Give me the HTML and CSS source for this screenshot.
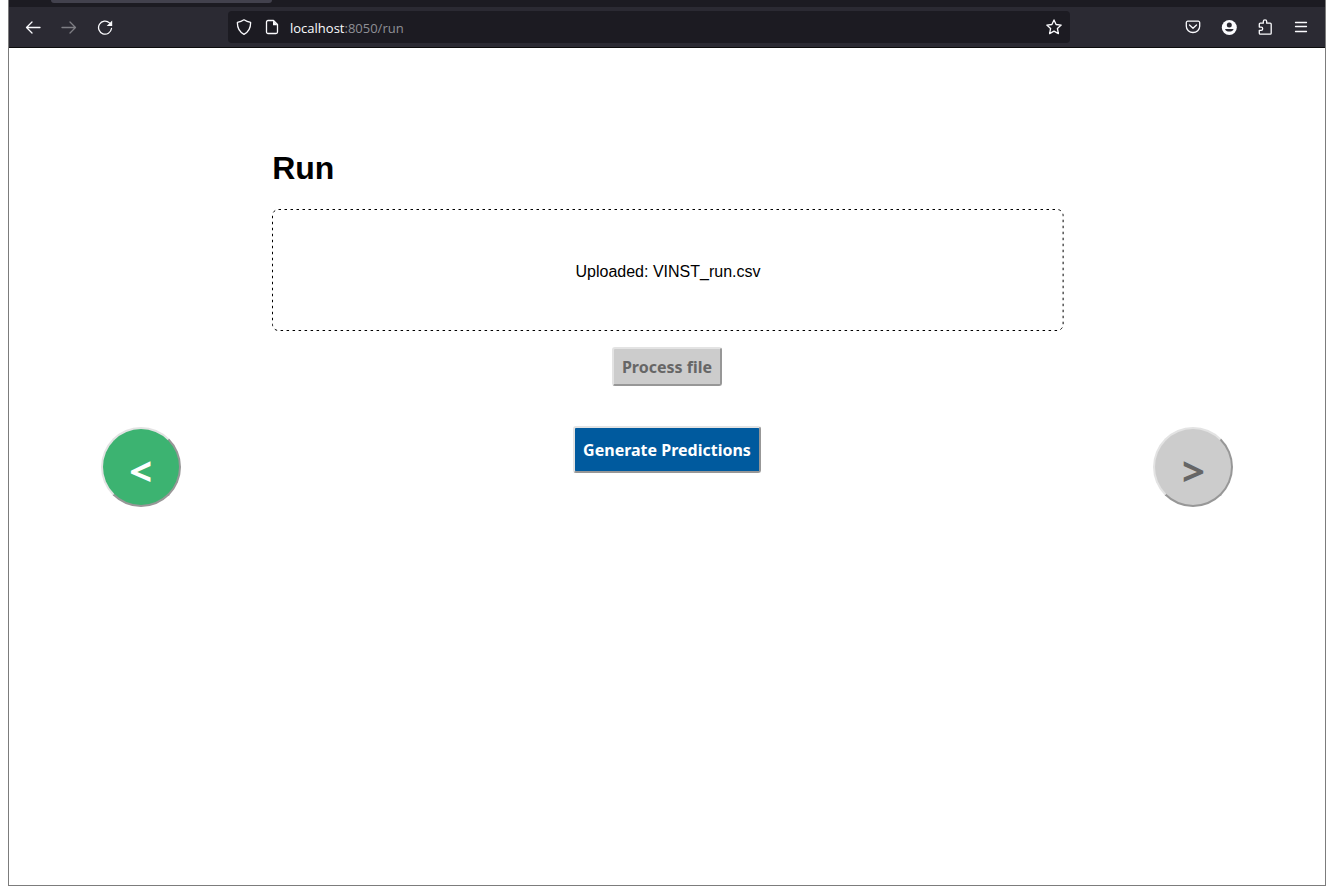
FILE: index.html
```html
<!DOCTYPE html>
<html lang="en">
<head>
<meta charset="utf-8">
<title>Run</title>
<link rel="stylesheet" href="styles.css">
</head>
<body>
<div class="window">
  <header class="browser">
    <div class="tabstrip"><div class="tab"></div></div>
    <nav class="toolbar" aria-label="Browser toolbar">
      <div class="group nav-group">
        <button class="tool" aria-label="Back"><svg viewBox="0 0 16 16"><path d="M15 8.500H1.500M7 3L1.500 8.500L7 14"/></svg></button>
        <button class="tool dim" aria-label="Forward"><svg viewBox="0 0 16 16"><path d="M1 8.500h13.500M9 3L14.500 8.500L9 14"/></svg></button>
        <button class="tool" aria-label="Reload"><svg viewBox="0 0 16 16"><path d="M14.500 9.500A6.500 6.500 0 1 1 12.500 3.900"/><path class="solid" d="M15.200 1.500v5.500H9.700z"/></svg></button>
      </div>
      <div class="address">
        <svg viewBox="0 0 16 16"><path d="M8 .8C6.200 2 4 2.900 1.400 3.300C1.200 8.800 3.500 13 8 15.300C12.500 13 14.800 8.800 14.600 3.300C12 2.900 9.800 2 8 .8z"/></svg>
        <svg viewBox="0 0 16 16"><path d="M4 1.500h5.500l4 4V13a1.500 1.500 0 0 1-1.500 1.500H4A1.500 1.500 0 0 1 2.500 13V3A1.500 1.500 0 0 1 4 1.500z"/><path class="solid" d="M9 1.500v4.700h4.500z"/></svg>
        <div class="url"><span>localhost</span>:8050/run</div>
        <button class="tool star" aria-label="Bookmark"><svg viewBox="0 0 16 16"><path d="M8 .9l2.100 4.600 5.100.6-3.800 3.400 1 5.100L8 12.100l-4.400 2.500 1-5.100L.8 6.100l5.100-.6z"/></svg></button>
      </div>
      <div class="group menu-group">
        <button class="tool" aria-label="Pocket"><svg viewBox="0 0 16 16"><path d="M2.800 2.200h10.400a1.500 1.500 0 0 1 1.500 1.500v3.500a6.700 6.300 0 0 1-13.400 0V3.700a1.500 1.500 0 0 1 1.500-1.500zM4.500 6L8 9.300 11.500 6"/></svg></button>
        <button class="tool" aria-label="Account"><svg viewBox="0 0 16 16"><circle class="disc" cx="8.300" cy="8.500" r="7.500"/><circle class="hole" cx="8.300" cy="6.100" r="2.500"/><path class="hole" d="M4 10h8.600a4.500 3.700 0 0 1-8.600 0z"/></svg></button>
        <button class="tool" aria-label="Extensions"><svg viewBox="0 0 16 16"><path d="M2.300 5.200a1 1 0 0 1 1-1h3V2.500a1.700 1.700 0 0 1 3.400 0v1.700h3.500a1 1 0 0 1 1 1v9a1 1 0 0 1-1 1h-9.900a1 1 0 0 1-1-1v-2.900h1.800a1.600 1.600 0 0 0 0-3.200H2.300z"/></svg></button>
        <button class="tool" aria-label="Menu"><svg viewBox="0 0 16 16"><path d="M2.500 3.500h11M2.500 7.500h11M2.500 12.500h11"/></svg></button>
      </div>
    </nav>
  </header>
  <main class="page">
    <div class="side"><button class="round prev" aria-label="Previous">&lt;</button></div>
    <section class="content">
      <h1>Run</h1>
      <div class="upload">
        <svg class="outline" aria-hidden="true"><rect class="dashes" x="0.500" y="0.500" rx="6"/></svg>
        Uploaded: VINST_run.csv
      </div>
      <button class="action process" disabled>Process file</button>
      <button class="action generate">Generate Predictions</button>
    </section>
    <div class="side"><button class="round next" aria-label="Next" disabled>&gt;</button></div>
  </main>
</div>
</body>
</html>
```
FILE: styles.css
```css
* { box-sizing: border-box; }
body {
  margin: 0;
  padding: 0 10px 7px 8px;
  min-height: 100vh;
  display: flex;
  background: #fff;
  color: #000;
  font: 16px/20px "Liberation Sans", Arial, sans-serif;
}
.window {
  flex: 1;
  display: flex;
  flex-direction: column;
  border: 1px solid #7c7c7c;
  border-top: 0;
}
.browser { background: #2b2a33; border-bottom: 1px solid #0c0c0d; }
.tabstrip { height: 7px; background: #1c1b22; padding-left: 42px; }
.tab { width: 221px; height: 3px; background: #42414d; border-radius: 0 0 3px 3px; }
.toolbar {
  display: grid;
  grid-template-columns: 167px 1fr 203px;
  gap: 36px;
  align-items: center;
  height: 40px;
  padding: 0 16px;
}
.group { display: flex; gap: 20px; }
.nav-group { margin-right: auto; }
.menu-group { margin-left: auto; }
.tool { display: flex; padding: 0; border: 0; background: none; }
.toolbar svg {
  display: block;
  flex: none;
  width: 16px;
  height: 16px;
  fill: none;
  stroke: #fbfbfe;
  stroke-width: 1.3;
  stroke-linecap: round;
  stroke-linejoin: round;
}
.toolbar .solid, .toolbar .disc { fill: #fbfbfe; stroke: none; }
.toolbar .hole { fill: #2b2a33; stroke: none; }
.dim { opacity: .4; }
.address {
  display: flex;
  align-items: center;
  gap: 12px;
  height: 32px;
  padding: 0 8px;
  background: #1c1b22;
  border-radius: 4px;
}
.url {
  flex: 1;
  margin-left: -2px;
  padding-top: 2px;
  font: 13px/20px "Open Sans", sans-serif;
  color: #8f8f95;
}
.url span { color: #fbfbfe; }
.page { flex: 1; display: grid; grid-template-columns: 1fr 3fr 1fr; align-items: start; }
.side { display: flex; justify-content: center; align-self: center; }
.content { display: flex; flex-direction: column; align-items: center; padding-top: 100px; }
h1 { align-self: stretch; margin: 0; font-size: 32px; line-height: 40px; }
.upload {
  position: relative;
  align-self: stretch;
  margin: 21px -2px 16px 0;
  padding: 53px 0 49px;
  text-align: center;
}
.outline { position: absolute; inset: 0; width: 100%; height: 100%; }
.dashes {
  width: calc(100% - 1px);
  height: calc(100% - 1px);
  fill: none;
  stroke: #000;
  stroke-dasharray: 2.500 3.500;
}
.action, .round {
  border: 2px solid;
  border-color: #e3e3e3 #979797 #979797 #e3e3e3;
  font-family: "Noto Sans", Tahoma, sans-serif;
  font-weight: 700;
}
.action { padding: 0 8px; border-radius: 3px; font-size: 16px; }
.process { height: 39px; background: #ccc; color: #666; }
.generate { height: 47px; margin-top: 40px; background: #005a9e; color: #fff; }
.round { width: 80px; height: 80px; padding: 8px 0 0; border-radius: 50%; font-size: 40px; line-height: 40px; }
.prev { background: #3cb371; color: #fff; }
.next { background: #ccc; color: #666; }
```
